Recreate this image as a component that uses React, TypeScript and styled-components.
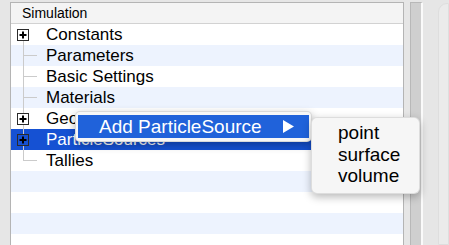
import React from "react";
import styled, { createGlobalStyle } from "styled-components";

const GlobalStyle = createGlobalStyle`
  html, body { margin: 0; padding: 0; }
  body {
    background: #e6e6e6;
    font-family: "Liberation Sans", Arial, sans-serif;
    color: #000;
  }
`;

type Kind = "root" | "mid" | "last" | "folder";

interface TreeItem {
  label: string;
  kind: Kind;
  selected?: boolean;
}

const items: TreeItem[] = [
  { label: "Constants", kind: "root" },
  { label: "Parameters", kind: "mid" },
  { label: "Basic Settings", kind: "mid" },
  { label: "Materials", kind: "mid" },
  { label: "Geometry", kind: "folder" },
  { label: "ParticleSources", kind: "folder", selected: true },
  { label: "Tallies", kind: "last" },
];

const EMPTY_ROWS = 5;
const LINE = "#cbcbcb";

const Connector: React.FC<{ kind: Kind }> = ({ kind }) => {
  const expandable = kind === "root" || kind === "folder";
  return (
    <svg width="30" height="21" viewBox="0 0 30 21">
      {kind === "root" && <rect x="12" y="17" width="1" height="4" fill={LINE} />}
      {kind === "folder" && (
        <>
          <rect x="12" y="0" width="1" height="5" fill={LINE} />
          <rect x="12" y="17" width="1" height="4" fill={LINE} />
        </>
      )}
      {kind === "mid" && (
        <>
          <rect x="12" y="0" width="1" height="21" fill={LINE} />
          <rect x="13" y="10" width="13" height="1" fill={LINE} />
        </>
      )}
      {kind === "last" && (
        <>
          <rect x="12" y="0" width="1" height="11" fill={LINE} />
          <rect x="13" y="10" width="13" height="1" fill={LINE} />
        </>
      )}
      {expandable && (
        <>
          <rect x="6.5" y="5.5" width="11" height="11" fill="none" stroke="#2a2a2a" strokeWidth="1" />
          <rect x="8.5" y="10" width="7" height="2" fill="#000" />
          <rect x="11" y="7.5" width="2" height="7" fill="#000" />
        </>
      )}
    </svg>
  );
};

export default function App() {
  return (
    <>
      <GlobalStyle />
      <Window>
        <Gutter />
        <TreePanel>
          <Header>Simulation</Header>
          {items.map((it, i) => (
            <Row key={it.label} $striped={i % 2 === 1} $selected={!!it.selected}>
              <Connector kind={it.kind} />
              <Label $selected={!!it.selected}>{it.label}</Label>
            </Row>
          ))}
          {Array.from({ length: EMPTY_ROWS }).map((_, j) => {
            const i = items.length + j;
            return <Row key={i} $striped={i % 2 === 1} $selected={false} />;
          })}

          <ContextMenu>
            <MenuItem $active>
              <span>Add ParticleSource</span>
              <svg width="12" height="13" viewBox="0 0 12 13">
                <polygon points="0,0 11,6.5 0,13" fill="#fff" />
              </svg>
            </MenuItem>
          </ContextMenu>

          <SubMenu>
            <SubItem>point</SubItem>
            <SubItem>surface</SubItem>
            <SubItem>volume</SubItem>
          </SubMenu>
        </TreePanel>
        <Spacer />
        <ScrollTrack />
        <Spacer $w={15} />
        <SidePanel />
      </Window>
    </>
  );
}

const Window = styled.div`
  display: flex;
  height: 245px;
  overflow: hidden;
  background: #e6e6e6;
`;

const Gutter = styled.div`
  width: 10px;
  flex: none;
`;

const TreePanel = styled.div`
  position: relative;
  flex: none;
  width: 392px;
  margin-top: 2px;
  background: #fff;
  border: 1px solid #b4b4b4;
  border-bottom: none;
`;

const Header = styled.div`
  height: 20px;
  display: flex;
  align-items: center;
  padding-left: 11px;
  font-size: 14px;
  background: #f4f4f4;
  border-bottom: 1px solid #d2d2d2;
`;

const Row = styled.div<{ $striped: boolean; $selected: boolean }>`
  height: 21px;
  display: flex;
  align-items: center;
  background: ${({ $selected, $striped }) =>
    $selected ? "#1551d3" : $striped ? "#edf3fe" : "#fff"};
`;

const Label = styled.span<{ $selected: boolean }>`
  padding-left: 5px;
  font-size: 17px;
  line-height: 21px;
  color: ${({ $selected }) => ($selected ? "#fff" : "#000")};
`;

const ContextMenu = styled.div`
  position: absolute;
  left: 64px;
  top: 108px;
  width: 231px;
  padding: 3px 2px;
  background: #f7f7f7;
  border: 1px solid rgba(0, 0, 0, 0.12);
  border-radius: 5px;
  box-shadow: 0 3px 9px rgba(0, 0, 0, 0.3);
`;

const MenuItem = styled.div<{ $active?: boolean }>`
  height: 23px;
  display: flex;
  align-items: center;
  justify-content: space-between;
  padding: 0 14px 0 21px;
  font-size: 19px;
  color: ${({ $active }) => ($active ? "#fff" : "#000")};
  background: ${({ $active }) => ($active ? "#2062da" : "transparent")};
`;

const SubMenu = styled.div`
  position: absolute;
  left: 300px;
  top: 114px;
  width: 81px;
  padding: 4px 0 6px 26px;
  background: #f6f6f6;
  border: 1px solid rgba(0, 0, 0, 0.1);
  border-radius: 6px;
  box-shadow: 0 3px 9px rgba(0, 0, 0, 0.28);
`;

const SubItem = styled.div`
  font-size: 19px;
  line-height: 21.5px;
  color: #000;
`;

const Spacer = styled.div<{ $w?: number }>`
  flex: none;
  width: ${({ $w }) => $w ?? 6}px;
`;

const ScrollTrack = styled.div`
  flex: none;
  width: 10px;
  margin-top: 2px;
  background: #cfcfcf;
  border-left: 1px solid #b8b8b8;
  border-top: 1px solid #b8b8b8;
  border-right: 2px solid #fafafa;
`;

const SidePanel = styled.div`
  flex: 1;
  margin-top: 3px;
  background: #ebebeb;
  border: 1px solid #dedede;
  border-radius: 9px 0 0 0;
`;
